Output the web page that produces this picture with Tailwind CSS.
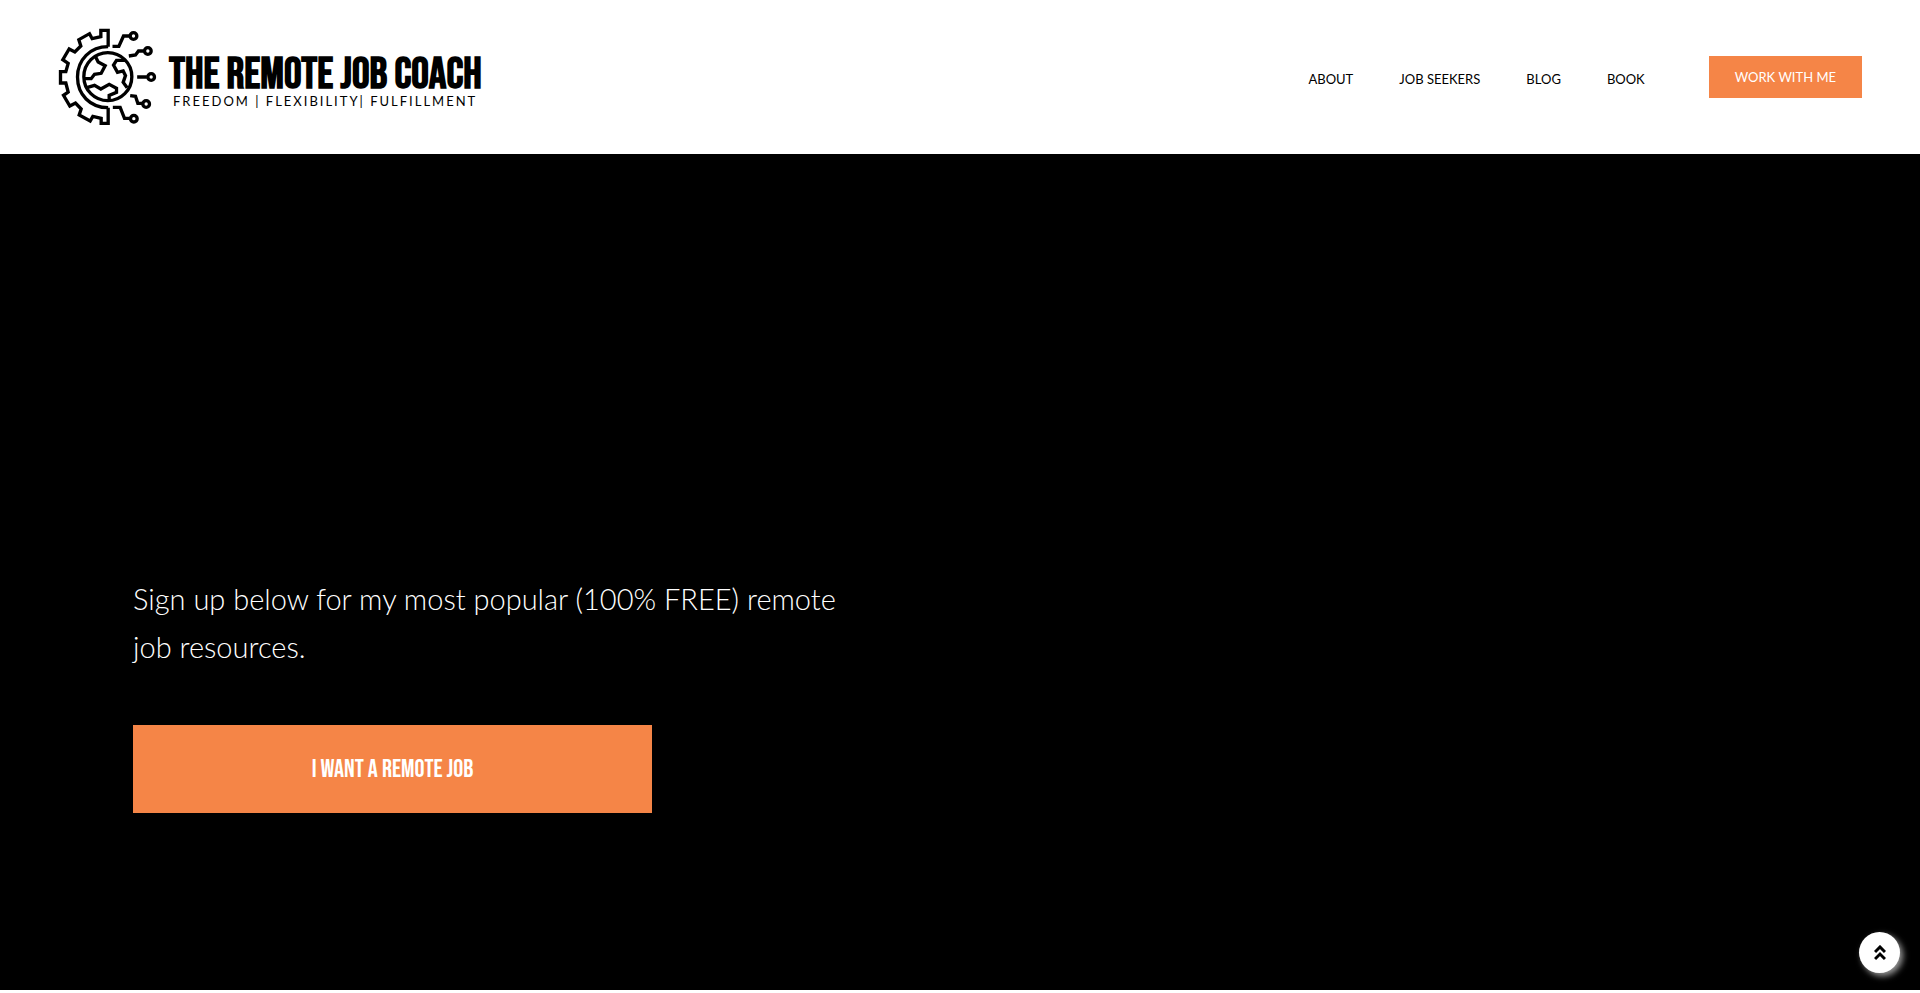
<!DOCTYPE html>
<html lang="en">
  <head>
    <meta charset="UTF-8" />
    <meta name="viewport" content="width=device-width, initial-scale=1.0" />
    <title>The Remote Job Coach</title>
    <script src="https://cdn.jsdelivr.net/npm/@tailwindcss/browser@4"></script>
  </head>
  <body class="bg-white font-['Lato',sans-serif]">
    <header class="flex items-center justify-between px-[58px] py-7">
      <a href="#" class="flex items-center gap-3 text-black">
        <svg class="w-[99px] h-[98px]" viewBox="26 24 294 294" fill="none" stroke="currentColor" stroke-width="10" aria-hidden="true">
          <!-- half gear -->
          <path d="M175 80V31H153V50L127 56L119 41L87 59L93 78L75 96L58 87L39 119L55 130L48 155H32V189H48L55 216L41 226L60 258L77 249L94 267L88 285L121 303L129 289L154 295V310H175V263" />
          <path d="M175 80C121 80 83 119 83 171C83 224 121 263 175 263" />
          <!-- globe -->
          <circle cx="174" cy="170" r="72" />
          <path d="M136 108L145 126L166 137L154 160L134 163L124 176H102" />
          <path d="M111 203L134 196L153 207L178 193L200 205V217L178 226V242" />
          <path d="M226 121H200L191 135L203 157L220 153L227 167L220 187L232 203" />
          <!-- circuit lines -->
          <path d="M188 79H207L221 48H239M237 108L257 105L266 93H281M262 171H291M241 227L257 229L264 250H277M189 262H211L224 295H239" />
          <circle cx="251" cy="48" r="10" />
          <circle cx="294" cy="93" r="10" />
          <circle cx="304" cy="171" r="10" />
          <circle cx="289" cy="252" r="10" />
          <circle cx="252" cy="296" r="10" />
        </svg>
        <span class="flex flex-col pt-3">
          <span class="font-['Bebas_Neue','Roboto',sans-serif] font-bold text-[44px] leading-9 whitespace-nowrap">THE REMOTE JOB COACH</span>
          <span class="pl-1 text-[13px] leading-4 tracking-[2px] whitespace-nowrap">FREEDOM | FLEXIBILITY| FULFILLMENT</span>
        </span>
      </a>
      <div class="flex items-center gap-16">
        <nav class="flex gap-[46px] pt-1 text-[13px] leading-5 text-black">
          <a href="#">ABOUT</a>
          <a href="#">JOB SEEKERS</a>
          <a href="#">BLOG</a>
          <a href="#">BOOK</a>
        </nav>
        <button type="button" class="bg-[#f58547] px-[26px] pt-0.5 h-[42px] text-[13px] text-white">WORK WITH ME</button>
      </div>
    </header>

    <main class="flex flex-col justify-end items-start min-h-[calc(100vh-157px)] bg-black px-[133px] pb-[177px] text-white">
      <p class="max-w-[720px] mb-[54px] text-[29px] leading-12 font-light">
        Sign up below for my most popular (100% FREE) remote job resources.
      </p>
      <button type="button" class="w-full max-w-[519px] h-22 pt-0.5 bg-[#f58547] font-['Bebas_Neue','Roboto',sans-serif] text-[25px]">I WANT A REMOTE JOB</button>
    </main>

    <button type="button" aria-label="Back to top" class="fixed right-5 bottom-5 flex items-center justify-center size-[41px] rounded-full bg-white text-black shadow-[3px_3px_6px_rgba(255,255,255,0.6)]">
      <svg class="w-3 h-4" viewBox="0 0 12 16" fill="none" stroke="currentColor" stroke-width="3" aria-hidden="true">
        <path d="M1 7L6 2L11 7M1 14L6 9L11 14" />
      </svg>
    </button>
  </body>
</html>
